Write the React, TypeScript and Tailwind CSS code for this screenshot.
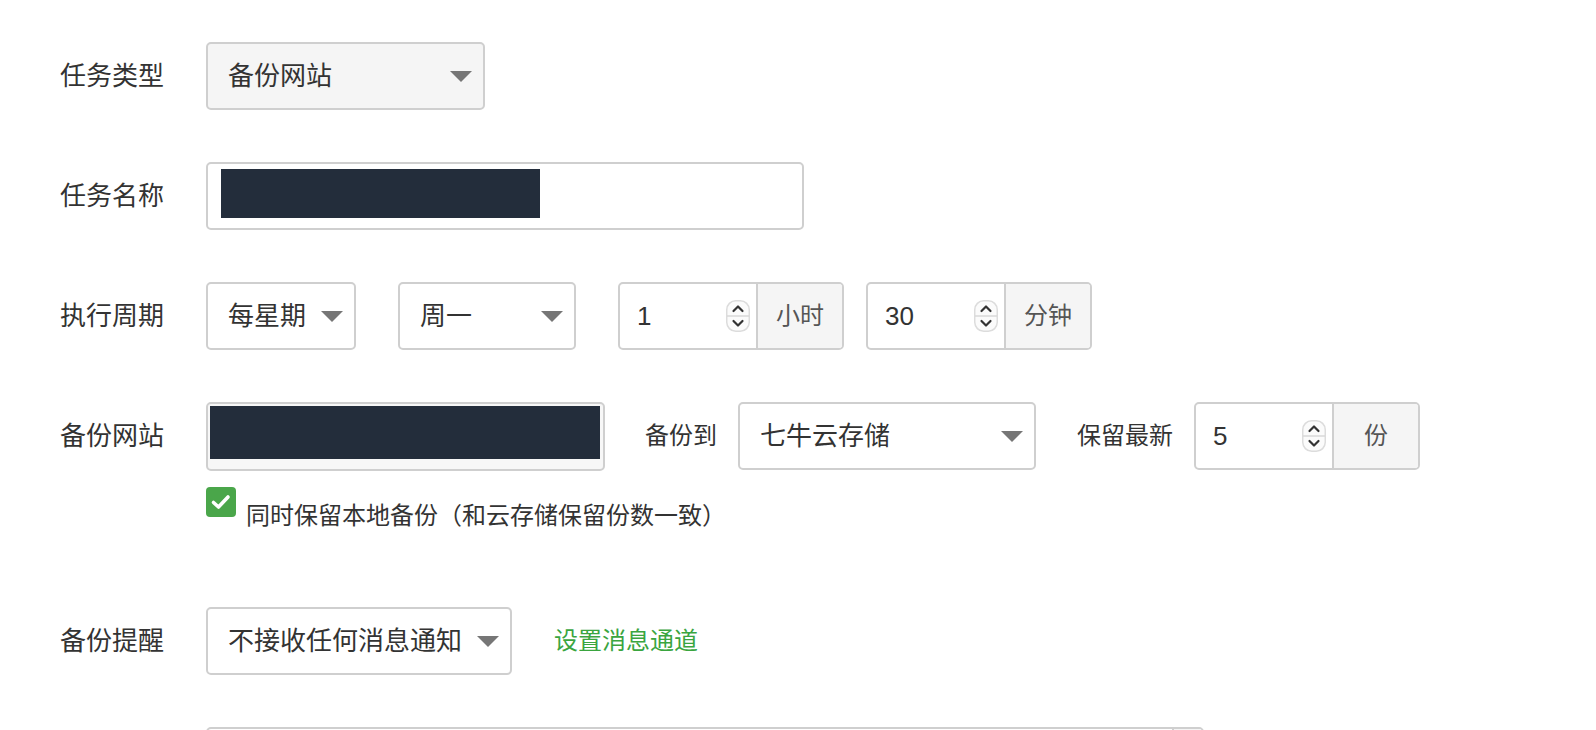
const Arrow = () => (
  <svg width="22" height="11" viewBox="0 0 22 11" className="shrink-0">
    <polygon points="0,0 22,0 11,11" fill="#767676" />
  </svg>
);

const Spinner = () => (
  <svg width="24" height="32" viewBox="0 0 24 32" className="shrink-0">
    <rect x="0.75" y="0.75" width="22.5" height="30.5" rx="9" fill="#fbfbfb" stroke="#dcdcdc" strokeWidth="1.5" />
    <line x1="1" y1="16" x2="23" y2="16" stroke="#d8d8d8" strokeWidth="1.5" />
    <polyline points="7.5,11 12,6.5 16.5,11" fill="none" stroke="#333" strokeWidth="2.2" strokeLinecap="round" strokeLinejoin="round" />
    <polyline points="7.5,21 12,25.5 16.5,21" fill="none" stroke="#333" strokeWidth="2.2" strokeLinecap="round" strokeLinejoin="round" />
  </svg>
);

function Label({ text }: { text: string }) {
  return (
    <div className="w-[206px] shrink-0 whitespace-nowrap pl-[60px] text-[26px] leading-[36px] text-[#333]">{text}</div>
  );
}

function Select({ value, width, gray }: { value: string; width: string; gray?: boolean }) {
  return (
    <div
      className={`flex h-[68px] ${width} shrink-0 items-center justify-between rounded-[5px] border-2 border-[#cfcfcf] pl-[20px] pr-[11px] ${
        gray ? "bg-[#f5f5f5]" : "bg-white"
      }`}
    >
      <span className="whitespace-nowrap text-[26px] leading-[36px] text-[#333]">{value}</span>
      <Arrow />
    </div>
  );
}

function NumberInput({ value, unit }: { value: string; unit: string }) {
  return (
    <div className="flex h-[68px] w-[226px] shrink-0 overflow-hidden rounded-[5px] border-2 border-[#cfcfcf] bg-white">
      <div className="flex w-[136px] items-center justify-between pl-[17px] pr-[6px]">
        <span className="text-[26px] leading-[36px] text-[#333]">{value}</span>
        <Spinner />
      </div>
      <div className="flex w-[86px] items-center justify-center border-l-2 border-[#cfcfcf] bg-[#f5f5f5] text-[24px] text-[#555]">
        {unit}
      </div>
    </div>
  );
}

export default function App() {
  return (
    <div className="h-[730px] w-full overflow-hidden bg-white pt-[42px] font-['Liberation_Sans','Noto_Sans_CJK_SC',sans-serif]">
      <div className="flex flex-col">
        {/* 任务类型 */}
        <div className="flex h-[68px] items-center">
          <Label text="任务类型" />
          <Select value="备份网站" width="w-[279px]" gray />
        </div>

        {/* 任务名称 */}
        <div className="mt-[52px] flex h-[68px] items-center">
          <Label text="任务名称" />
          <div className="h-[68px] w-[598px] rounded-[5px] border-2 border-[#cfcfcf] bg-white pl-[13px] pt-[5px]">
            <div className="h-[49px] w-[319px] bg-[#232d3b]" />
          </div>
        </div>

        {/* 执行周期 */}
        <div className="mt-[52px] flex h-[68px] items-center">
          <Label text="执行周期" />
          <Select value="每星期" width="w-[150px]" />
          <div className="ml-[42px]">
            <Select value="周一" width="w-[178px]" />
          </div>
          <div className="ml-[42px]">
            <NumberInput value="1" unit="小时" />
          </div>
          <div className="ml-[22px]">
            <NumberInput value="30" unit="分钟" />
          </div>
        </div>

        {/* 备份网站 */}
        <div className="mt-[52px] flex h-[68px] items-center">
          <Label text="备份网站" />
          <div className="h-[69px] w-[399px] shrink-0 rounded-[5px] border-2 border-[#cfcfcf] bg-[#f7f7f7] pl-[2px] pt-[2px]">
            <div className="h-[53px] w-[390px] bg-[#232d3b]" />
          </div>
          <span className="ml-[40px] whitespace-nowrap text-[24px] leading-[36px] text-[#333]">备份到</span>
          <div className="ml-[21px]">
            <Select value="七牛云存储" width="w-[298px]" />
          </div>
          <span className="ml-[41px] whitespace-nowrap text-[24px] leading-[36px] text-[#333]">保留最新</span>
          <div className="ml-[21px]">
            <NumberInput value="5" unit="份" />
          </div>
        </div>

        <div className="ml-[206px] mt-[17px] flex items-start">
          <div className="flex h-[30px] w-[30px] items-center justify-center rounded-[4px] bg-[#4aa64a]">
            <svg width="24" height="24" viewBox="0 0 24 24">
              <polyline points="4.5,12.5 9.5,17 19,7" fill="none" stroke="#fff" strokeWidth="3.6" strokeLinecap="round" strokeLinejoin="round" />
            </svg>
          </div>
          <span className="ml-[10px] mt-[14px] text-[24px] leading-[30px] text-[#333]">
            同时保留本地备份（和云存储保留份数一致）
          </span>
        </div>

        {/* 备份提醒 */}
        <div className="mt-[76px] flex h-[68px] items-center">
          <Label text="备份提醒" />
          <Select value="不接收任何消息通知" width="w-[306px]" />
          <a href="#" className="ml-[42px] whitespace-nowrap text-[24px] leading-[36px] text-[#3aa53f]">
            设置消息通道
          </a>
        </div>

        <div className="mt-[52px] flex h-[68px] items-center">
          <div className="w-[206px] shrink-0" />
          <div className="flex h-[68px] w-[998px] overflow-hidden rounded-[5px] border-2 border-[#cfcfcf] bg-white">
            <div className="flex-1" />
            <div className="w-[30px] border-l-2 border-[#cfcfcf] bg-[#f5f5f5]" />
          </div>
        </div>
      </div>
    </div>
  );
}
